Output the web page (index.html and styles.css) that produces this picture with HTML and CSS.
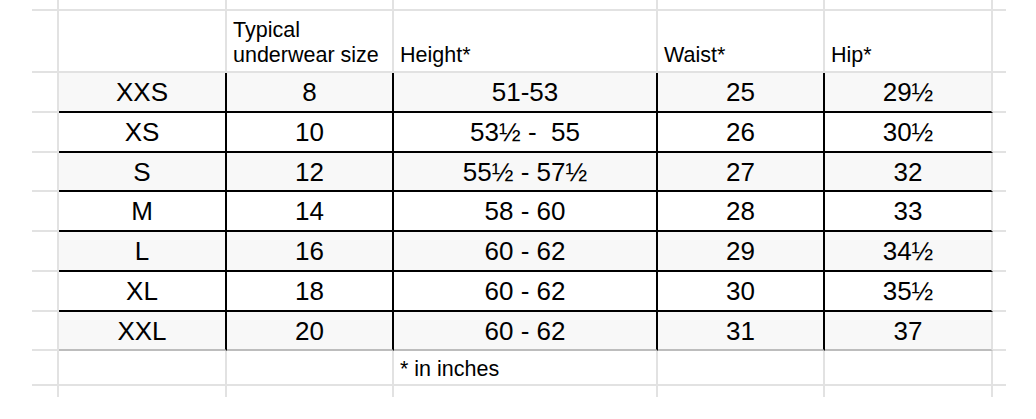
FILE: index.html
```html
<!DOCTYPE html>
<html lang="en">
<head>
<meta charset="utf-8">
<title>Size chart</title>
<link rel="stylesheet" href="styles.css">
</head>
<body>
<div class="sheet">
  <div class="row r-top">
    <div class="cell"></div><div class="cell"></div><div class="cell"></div><div class="cell"></div><div class="cell"></div><div class="cell"></div><div class="cell"></div>
  </div>
  <div class="row r-head">
    <div class="cell"></div>
    <div class="cell"></div>
    <div class="cell head">Typical<br>underwear size</div>
    <div class="cell head">Height*</div>
    <div class="cell head">Waist*</div>
    <div class="cell head">Hip*</div>
    <div class="cell"></div>
  </div>
  <div class="row data alt h40">
    <div class="cell"></div>
    <div class="cell t">XXS</div><div class="cell t">8</div><div class="cell t">51-53</div><div class="cell t">25</div><div class="cell t last">29½</div>
    <div class="cell"></div>
  </div>
  <div class="row data h40">
    <div class="cell"></div>
    <div class="cell t">XS</div><div class="cell t">10</div><div class="cell t pre">53½ -  55</div><div class="cell t">26</div><div class="cell t last">30½</div>
    <div class="cell"></div>
  </div>
  <div class="row data alt h39">
    <div class="cell"></div>
    <div class="cell t">S</div><div class="cell t">12</div><div class="cell t">55½ - 57½</div><div class="cell t">27</div><div class="cell t last">32</div>
    <div class="cell"></div>
  </div>
  <div class="row data h40">
    <div class="cell"></div>
    <div class="cell t">M</div><div class="cell t">14</div><div class="cell t">58 - 60</div><div class="cell t">28</div><div class="cell t last">33</div>
    <div class="cell"></div>
  </div>
  <div class="row data alt h40">
    <div class="cell"></div>
    <div class="cell t">L</div><div class="cell t">16</div><div class="cell t">60 - 62</div><div class="cell t">29</div><div class="cell t last">34½</div>
    <div class="cell"></div>
  </div>
  <div class="row data h40">
    <div class="cell"></div>
    <div class="cell t">XL</div><div class="cell t">18</div><div class="cell t">60 - 62</div><div class="cell t">30</div><div class="cell t last">35½</div>
    <div class="cell"></div>
  </div>
  <div class="row data alt end h39">
    <div class="cell"></div>
    <div class="cell t">XXL</div><div class="cell t">20</div><div class="cell t">60 - 62</div><div class="cell t">31</div><div class="cell t last">37</div>
    <div class="cell"></div>
  </div>
  <div class="row r-foot">
    <div class="cell"></div><div class="cell"></div><div class="cell"></div>
    <div class="cell note">* in inches</div>
    <div class="cell"></div><div class="cell"></div><div class="cell"></div>
  </div>
  <div class="row r-tail">
    <div class="cell"></div><div class="cell"></div><div class="cell"></div><div class="cell"></div><div class="cell"></div><div class="cell"></div><div class="cell"></div>
  </div>
</div>
</body>
</html>
```

FILE: styles.css
```css
* {
  box-sizing: border-box;
}

html, body {
  margin: 0;
  padding: 0;
  background: #ffffff;
}

body {
  font-family: "Liberation Sans", Arial, sans-serif;
  color: #000;
  width: 1036px;
  height: 419px;
  overflow: hidden;
}

.sheet {
  display: flex;
  flex-direction: column;
  padding-left: 32px;
}

.row {
  display: grid;
  grid-template-columns: 27px 168px 167px 264px 167px 168px 13px;
}

.r-top { height: 11px; }
.r-head { height: 62px; }
.h40 { height: 40px; }
.h39 { height: 39px; }
.r-foot { height: 35px; }
.r-tail { height: 11px; }

.cell {
  border-right: 2px solid #e2e2e2;
  border-bottom: 2px solid #e2e2e2;
}

.cell:last-child {
  border-right: none;
}

.r-tail .cell {
  border-bottom: none;
}

.head {
  display: flex;
  align-items: flex-end;
  padding: 0 6px 3px 6px;
  font-size: 21.5px;
  line-height: 25px;
}

.note {
  display: flex;
  align-items: flex-end;
  padding: 0 6px 2px 6px;
  font-size: 21.5px;
  line-height: 25px;
}

.data .t {
  display: flex;
  align-items: center;
  justify-content: center;
  font-size: 26px;
  line-height: 30px;
  border-right-color: #000;
  border-bottom-color: #000;
}

.data .t.last {
  border-right-color: #e2e2e2;
}

.data.alt .t {
  background: #f8f8f8;
}

.data.end .t {
  border-bottom-color: #bdbdbd;
}

.pre {
  white-space: pre;
}
```
